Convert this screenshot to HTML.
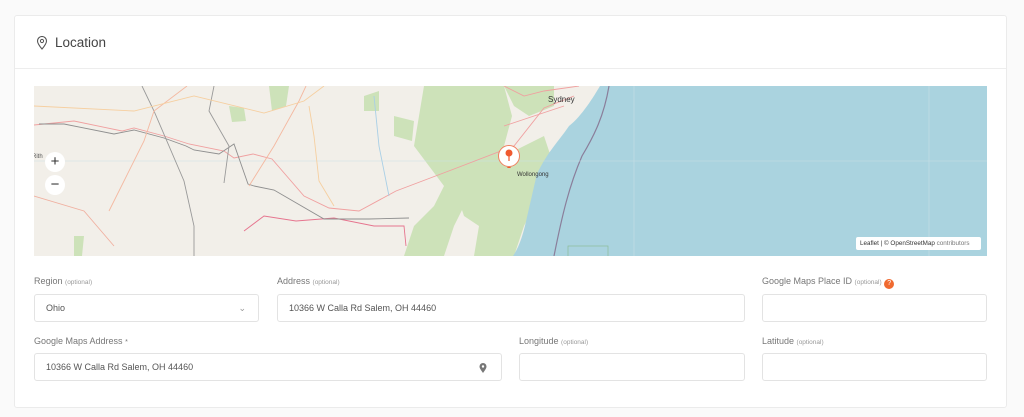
<!DOCTYPE html>
<html><head><meta charset="utf-8"><style>
body{margin:0;width:1024px;height:417px;background:#fafafa;font-family:"Liberation Sans",sans-serif;position:relative;overflow:hidden}
.card{position:absolute;left:14px;top:15px;width:991px;height:391px;background:#fff;border:1px solid #ebebeb;border-radius:3px}
.hd{position:absolute;left:0;top:0;width:991px;height:52px;border-bottom:1px solid #ededed}
.title{position:absolute;left:40px;top:19px;font-size:13.5px;color:#444}
.lbl{position:absolute;font-size:9px;color:#777;white-space:nowrap}
.lbl small{font-size:6.5px;color:#999}
.in{position:absolute;height:28px;border:1px solid #e3e3e3;border-radius:3px;background:#fff;box-sizing:border-box;font-size:9px;color:#555;line-height:27px;padding-left:11px}
.map{position:absolute;left:34px;top:86px;width:953px;height:170px;overflow:hidden;background:#f2efe9}
.zb{position:absolute;left:11px;width:20px;height:20px;border-radius:50%;background:#fff;text-align:center;line-height:19px;font-size:15px;color:#333}
</style></head><body>
<div class="card">
<div class="hd">
<svg style="position:absolute;left:21px;top:20px" width="12" height="14" viewBox="0 0 12 14"><path d="M6 13C3 9.5 1.5 7 1.5 5a4.5 4.5 0 0 1 9 0c0 2-1.5 4.5-4.5 8z" fill="none" stroke="#555" stroke-width="1.1"/><circle cx="6" cy="5" r="1.6" fill="none" stroke="#555" stroke-width="1"/></svg>
<div class="title">Location</div>
</div>
</div>
<div class="map">
<svg width="953" height="170" viewBox="0 0 953 170">
<g fill="#cde2b9">
<path d="M390 0 L470 0 L478 30 L470 60 L462 90 L450 110 L430 120 L420 140 L410 170 L370 170 L380 140 L400 120 L410 100 L395 80 L380 60 L385 30 Z"/>
<path d="M420 100 L470 70 L510 50 L520 80 L505 110 L490 140 L480 170 L440 170 L445 140 L430 130 Z"/>
<path d="M470 0 L520 0 L520 20 L495 30 L480 20Z"/>
<path d="M235 0 L255 0 L252 20 L238 25Z"/>
<path d="M195 20 L210 22 L212 35 L198 36Z"/>
<path d="M330 10 L345 5 L345 25 L330 25Z"/>
<path d="M40 150 L50 150 L48 170 L40 170Z"/>
<path d="M360 30 L380 35 L378 55 L360 50Z"/>
</g>
<path d="M566 0 C560 10 548 30 535 40 C525 55 514 65 503 88 C500 100 498 110 493 131 C490 145 486 160 479 170 L953 170 L953 0 Z" fill="#aad3df"/>
<path d="M575 0 C570 30 560 50 548 70 C535 100 528 130 520 170" fill="none" stroke="#8a7e9a" stroke-width="1.2"/>
<path d="M600 0V170M895 0V170M0 75H953" stroke="#c8dfe6" stroke-width="0.6" fill="none"/>
<rect x="534" y="160" width="40" height="12" fill="none" stroke="#8cbd96" stroke-width="0.7"/>
<g fill="none" stroke-width="0.9">
<path d="M0 39 L40 35 L88 45 L100 42 L130 50 L155 58 L190 65 L200 72 L219 68 L238 73 L270 110 L295 122 L325 125 L362 105 L420 83 L480 60 L510 22 L540 10" stroke="#f0a0a0"/>
<path d="M210 145 L230 130 L262 135 L300 132 L340 140 L370 140 L372 160" stroke="#e6748e"/>
<path d="M5 38 L30 38 L80 48 L100 44 L130 52 L152 60 L160 64 L185 68 L200 58 L214 98 L220 100 L240 104 L290 133 L335 133 L375 132" stroke="#8f8f8f"/>
<path d="M108 0 L120 25 L150 95 L160 140 L160 170" stroke="#999"/>
<path d="M180 0 L175 25 L195 60 L190 97" stroke="#999"/>
<path d="M0 110 L50 125 L80 160" stroke="#f0b0a0"/>
<path d="M153 0 L120 25 L110 55 L75 125" stroke="#f4b8a0"/>
<path d="M272 0 L265 15 L240 60 L215 100" stroke="#f4b8a0"/>
<path d="M275 20 L280 50 L285 95 L300 120" stroke="#f6cfa0"/>
<path d="M340 10 L345 60 L355 110" stroke="#a9cfe6"/>
<path d="M0 20 L100 25 L160 10 L230 27 L270 15 L290 0" stroke="#f6cfa0"/>
<path d="M470 0 L490 10 L510 5 L545 0 M470 40 L500 30 L530 20" stroke="#f0a0a0"/>
</g>
</svg>
<div class="zb" style="top:66px">+</div>
<div class="zb" style="top:89px">−</div>
<div style="position:absolute;left:-2px;top:68px;font-size:6px;color:#555">Rith</div>
<div style="position:absolute;left:514px;top:9px;font-size:8px;color:#333">Sydney</div>
<div style="position:absolute;left:483px;top:86px;font-size:6px;color:#333">Wollongong</div>
<div style="position:absolute;left:464px;top:59px;width:22px;height:22px;border-radius:50%;background:#fff;border:1px solid #f08060;box-sizing:border-box"></div>
<svg style="position:absolute;left:469px;top:62px" width="12" height="20" viewBox="0 0 12 20"><circle cx="6" cy="5" r="3.5" fill="#f05a30"/><path d="M6 8V13" stroke="#f05a30" stroke-width="1.2"/><path d="M4 19L8 19L6 22Z" fill="#f05a30"/></svg>
<div style="position:absolute;left:822px;top:151px;width:125px;height:13px;background:#fff;border-radius:2px;font-size:6.3px;color:#333;line-height:13px;padding-left:4px;box-sizing:border-box;white-space:nowrap">Leaflet | © OpenStreetMap <span style="color:#777">contributors</span></div>
</div>
<div class="lbl" style="left:34px;top:276px">Region <small>(optional)</small></div>
<div class="lbl" style="left:277px;top:276px">Address <small>(optional)</small></div>
<div class="lbl" style="left:762px;top:276px">Google Maps Place ID <small>(optional)</small> <span style="display:inline-block;width:10px;height:10px;border-radius:50%;background:#f06a30;color:#fff;font-size:7px;text-align:center;line-height:10px;vertical-align:-1px">?</span></div>
<div class="in" style="left:34px;top:294px;width:225px">Ohio<span style="position:absolute;right:12px;top:0;color:#999;font-size:9px">&#8964;</span></div>
<div class="in" style="left:277px;top:294px;width:468px">10366 W Calla Rd Salem, OH 44460</div>
<div class="in" style="left:762px;top:294px;width:225px"></div>
<div class="lbl" style="left:34px;top:336px">Google Maps Address <span style="font-size:7px">*</span></div>
<div class="lbl" style="left:519px;top:336px">Longitude <small>(optional)</small></div>
<div class="lbl" style="left:762px;top:336px">Latitude <small>(optional)</small></div>
<div class="in" style="left:34px;top:353px;width:468px">10366 W Calla Rd Salem, OH 44460
<svg style="position:absolute;right:14px;top:9px" width="8" height="10" viewBox="0 0 8 10"><path d="M4 10C1.5 6.5 0.5 5 0.5 3.5a3.5 3.5 0 0 1 7 0C7.5 5 6.5 6.5 4 10z" fill="#777"/><circle cx="4" cy="3.5" r="1.2" fill="#fff"/></svg></div>
<div class="in" style="left:519px;top:353px;width:226px"></div>
<div class="in" style="left:762px;top:353px;width:225px"></div>
</body></html>
